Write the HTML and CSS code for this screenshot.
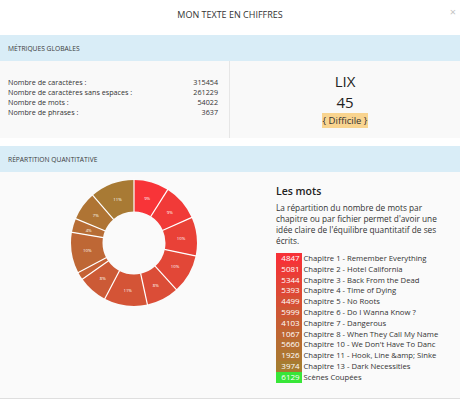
FILE: index.html
```html
<!DOCTYPE html>
<html lang="fr">
<head>
<meta charset="utf-8">
<title>Mon texte en chiffres</title>
<link rel="stylesheet" href="styles.css">
</head>
<body>
<div class="modal">
  <header class="modal-header">
    <h1 class="modal-title">MON TEXTE EN CHIFFRES</h1>
    <button class="close" type="button">×</button>
  </header>

  <section class="panel">
    <div class="panel-heading">MÉTRIQUES GLOBALES</div>
    <div class="panel-body metrics">
      <div class="counts">
        <div class="count-row"><span>Nombre de caractères :</span><span>315454</span></div>
        <div class="count-row"><span>Nombre de caractères sans espaces :</span><span>261229</span></div>
        <div class="count-row"><span>Nombre de mots :</span><span>54022</span></div>
        <div class="count-row"><span>Nombre de phrases :</span><span>3637</span></div>
      </div>
      <div class="lix">
        <div class="lix-title">LIX</div>
        <div class="lix-value">45</div>
        <span class="lix-level">{ Difficile }</span>
      </div>
    </div>
  </section>

  <section class="panel panel-split">
    <div class="panel-heading">RÉPARTITION QUANTITATIVE</div>
    <div class="panel-body repartition">
      <div class="chart">
        <svg class="donut" width="130" height="130" viewBox="-65 -65 130 130">
          <g transform="rotate(-90)" fill="none" stroke-width="31.5">
            <circle r="47.25" pathLength="360" stroke="rgb(248,52,56)" stroke-dasharray="32.30 400" stroke-dashoffset="0"/>
            <circle r="47.25" pathLength="360" stroke="rgb(241,58,56)" stroke-dasharray="33.86 400" stroke-dashoffset="-32.30"/>
            <circle r="47.25" pathLength="360" stroke="rgb(233,65,55)" stroke-dasharray="35.61 400" stroke-dashoffset="-66.16"/>
            <circle r="47.25" pathLength="360" stroke="rgb(226,71,55)" stroke-dasharray="35.94 400" stroke-dashoffset="-101.77"/>
            <circle r="47.25" pathLength="360" stroke="rgb(219,77,55)" stroke-dasharray="29.98 400" stroke-dashoffset="-137.71"/>
            <circle r="47.25" pathLength="360" stroke="rgb(212,84,54)" stroke-dasharray="39.98 400" stroke-dashoffset="-167.69"/>
            <circle r="47.25" pathLength="360" stroke="rgb(204,90,54)" stroke-dasharray="27.34 400" stroke-dashoffset="-207.67"/>
            <circle r="47.25" pathLength="360" stroke="rgb(197,97,53)" stroke-dasharray="7.11 400" stroke-dashoffset="-235.01"/>
            <circle r="47.25" pathLength="360" stroke="rgb(190,103,53)" stroke-dasharray="37.72 400" stroke-dashoffset="-242.12"/>
            <circle r="47.25" pathLength="360" stroke="rgb(183,109,53)" stroke-dasharray="12.84 400" stroke-dashoffset="-279.84"/>
            <circle r="47.25" pathLength="360" stroke="rgb(175,116,52)" stroke-dasharray="26.48 400" stroke-dashoffset="-292.68"/>
            <circle r="47.25" pathLength="360" stroke="rgb(168,122,52)" stroke-dasharray="40.84 400" stroke-dashoffset="-319.16"/>
          </g>
          <g stroke="#ffffff" stroke-width="1.2">
            <line x1="0" y1="-31" x2="0" y2="-64" transform="rotate(0)"/>
            <line x1="0" y1="-31" x2="0" y2="-64" transform="rotate(32.30)"/>
            <line x1="0" y1="-31" x2="0" y2="-64" transform="rotate(66.16)"/>
            <line x1="0" y1="-31" x2="0" y2="-64" transform="rotate(101.77)"/>
            <line x1="0" y1="-31" x2="0" y2="-64" transform="rotate(137.71)"/>
            <line x1="0" y1="-31" x2="0" y2="-64" transform="rotate(167.69)"/>
            <line x1="0" y1="-31" x2="0" y2="-64" transform="rotate(207.67)"/>
            <line x1="0" y1="-31" x2="0" y2="-64" transform="rotate(235.01)"/>
            <line x1="0" y1="-31" x2="0" y2="-64" transform="rotate(242.12)"/>
            <line x1="0" y1="-31" x2="0" y2="-64" transform="rotate(279.84)"/>
            <line x1="0" y1="-31" x2="0" y2="-64" transform="rotate(292.68)"/>
            <line x1="0" y1="-31" x2="0" y2="-64" transform="rotate(319.16)"/>
          </g>
          <g class="donut-labels">
            <text transform="rotate(16.15) translate(0 -47.25) rotate(-16.15)">9%</text>
            <text transform="rotate(49.23) translate(0 -47.25) rotate(-49.23)">9%</text>
            <text transform="rotate(83.97) translate(0 -47.25) rotate(-83.97)">10%</text>
            <text transform="rotate(119.74) translate(0 -47.25) rotate(-119.74)">10%</text>
            <text transform="rotate(152.70) translate(0 -47.25) rotate(-152.70)">8%</text>
            <text transform="rotate(187.68) translate(0 -47.25) rotate(-187.68)">11%</text>
            <text transform="rotate(221.34) translate(0 -47.25) rotate(-221.34)">8%</text>
            <text transform="rotate(260.98) translate(0 -47.25) rotate(-260.98)">10%</text>
            <text transform="rotate(286.26) translate(0 -47.25) rotate(-286.26)">4%</text>
            <text transform="rotate(305.92) translate(0 -47.25) rotate(-305.92)">7%</text>
            <text transform="rotate(339.58) translate(0 -47.25) rotate(-339.58)">11%</text>
          </g>
        </svg>
      </div>
      <div class="words">
        <h2 class="words-title">Les mots</h2>
        <p class="words-text">La répartition du nombre de mots par chapitre ou par fichier permet d'avoir une idée claire de l'équilibre quantitatif de ses écrits.</p>
        <ul class="legend">
          <li><span class="legend-count" style="background:rgb(246,50,55)">4847</span><span class="legend-label">Chapitre 1 - Remember Everything</span></li>
          <li><span class="legend-count" style="background:rgb(238,57,54)">5081</span><span class="legend-label">Chapitre 2 - Hotel California</span></li>
          <li><span class="legend-count" style="background:rgb(230,65,54)">5344</span><span class="legend-label">Chapitre 3 - Back From the Dead</span></li>
          <li><span class="legend-count" style="background:rgb(222,72,53)">5393</span><span class="legend-label">Chapitre 4 - Time of Dying</span></li>
          <li><span class="legend-count" style="background:rgb(214,80,52)">4499</span><span class="legend-label">Chapitre 5 - No Roots</span></li>
          <li><span class="legend-count" style="background:rgb(206,87,52)">5999</span><span class="legend-label">Chapitre 6 - Do I Wanna Know ?</span></li>
          <li><span class="legend-count" style="background:rgb(198,94,51)">4103</span><span class="legend-label">Chapitre 7 - Dangerous</span></li>
          <li><span class="legend-count" style="background:rgb(190,102,50)">1067</span><span class="legend-label">Chapitre 8 - When They Call My Name</span></li>
          <li><span class="legend-count" style="background:rgb(182,109,50)">5660</span><span class="legend-label">Chapitre 10 - We Don't Have To Danc</span></li>
          <li><span class="legend-count" style="background:rgb(174,117,49)">1926</span><span class="legend-label">Chapitre 11 - Hook, Line &amp;amp; Sinke</span></li>
          <li><span class="legend-count" style="background:rgb(166,124,48)">3974</span><span class="legend-label">Chapitre 13 - Dark Necessities</span></li>
          <li><span class="legend-count" style="background:rgb(56,230,56)">6129</span><span class="legend-label">Scènes Coupées</span></li>
        </ul>
      </div>
    </div>
  </section>
</div>
</body>
</html>
```

FILE: styles.css
```css
* {
  box-sizing: border-box;
}

html, body {
  margin: 0;
  padding: 0;
  background: #ffffff;
}

body {
  font-family: "Open Sans", "Liberation Sans", sans-serif;
  color: #333333;
}

.modal {
  width: 460px;
  height: 400px;
  overflow: hidden;
}

.modal-header {
  position: relative;
  height: 35px;
  display: flex;
  justify-content: center;
  padding-top: 7px;
}

.modal-title {
  margin: 0;
  font-size: 9px;
  line-height: 15px;
  font-weight: 400;
  color: #333333;
}

.close {
  position: absolute;
  top: 4px;
  right: 4px;
  border: 0;
  background: none;
  padding: 0;
  font-family: "Open Sans", sans-serif;
  font-size: 11px;
  line-height: 15px;
  color: #c4c4c4;
}

.panel-heading {
  height: 26px;
  display: flex;
  align-items: center;
  padding: 0 8px;
  background: #d9edf7;
  font-size: 6.7px;
  color: #3a3a3a;
}

.panel-body {
  background: #f9f9f9;
}

.metrics {
  height: 77px;
  display: grid;
  grid-template-columns: 229px 1fr;
}

.counts {
  padding: 16px 11px 0 8px;
  font-size: 7.2px;
  line-height: 10.1px;
}

.count-row {
  display: flex;
  justify-content: space-between;
}

.lix {
  border-left: 1px solid #e6e6e6;
  display: flex;
  flex-direction: column;
  align-items: center;
  padding-top: 9.5px;
}

.lix-title,
.lix-value {
  font-size: 15px;
  line-height: 21px;
  color: #222222;
}

.lix-level {
  margin-top: 0.5px;
  padding: 0 1px;
  background: #f9d48f;
  font-size: 9.5px;
  line-height: 15px;
  color: #333333;
}

.panel-split {
  margin-top: 8px;
}

.repartition {
  height: 227px;
  display: grid;
  grid-template-columns: 267px 1fr;
  background: #fafafa;
  border-bottom: 1px solid #dedede;
}

.chart {
  display: flex;
  justify-content: center;
  align-items: flex-start;
  padding-top: 6px;
}

.donut {
  display: block;
}

.donut-labels text {
  fill: #ffffff;
  font-family: "Open Sans", sans-serif;
  font-size: 4.3px;
  text-anchor: middle;
  dominant-baseline: central;
}

.words {
  padding: 11px 14px 0 9px;
}

.words-title {
  margin: 0 0 3px;
  font-size: 10.5px;
  line-height: 16px;
  font-weight: 600;
  color: #222222;
}

.words-text {
  margin: 0 0 7px;
  font-size: 8.27px;
  line-height: 11px;
  color: #333333;
}

.legend {
  list-style: none;
  margin: 0;
  padding: 0;
}

.legend li {
  display: flex;
  align-items: stretch;
  height: 10.8px;
  font-size: 7.7px;
  line-height: 10.8px;
}

.legend-count {
  width: 26px;
  padding-right: 2.4px;
  text-align: right;
  color: #ffffff;
  font-size: 8px;
}

.legend-label {
  padding-left: 1.5px;
  white-space: nowrap;
  color: #333333;
}
```
